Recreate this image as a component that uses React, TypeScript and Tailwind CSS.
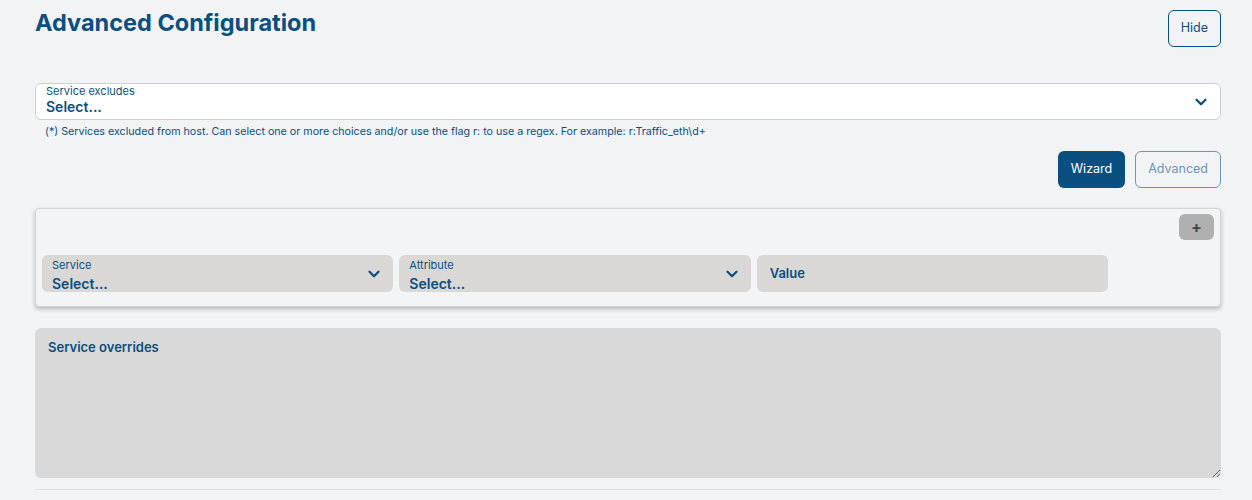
import { ChevronDown } from 'lucide-react';

const SelectBox = ({ label, muted }: { label: string; muted?: boolean }) => (
  <div
    className={`flex items-center justify-between rounded-md h-[37px] pl-[10px] pr-[10px] min-w-0 ${
      muted ? 'bg-[#d9d8d6]' : 'bg-white border border-[#cfcfcf]'
    }`}
  >
    <div className={`flex flex-col leading-none ${muted ? 'mt-[3px]' : 'mt-[-3px]'}`}>
      <span className={`text-[11px] text-[#0b4f80] ${muted ? 'mb-[6px]' : 'mb-[3px]'}`}>{label}</span>
      <span className="text-[14px] font-semibold text-[#0b4f80]">Select...</span>
    </div>
    <ChevronDown className="w-[18px] h-[18px] text-[#0b4f80]" strokeWidth={3} />
  </div>
);

const App = () => {
  return (
    <div className="min-h-[500px] bg-[#f2f3f5] pl-[35px] pr-[31px] pt-[10px] font-['Inter',sans-serif] text-[#0b4f80]">
      <div className="flex justify-between items-start">
        <h1 className="text-[23.5px] font-bold mt-[-1px] leading-[28px]">Advanced Configuration</h1>
        <button className="h-[37px] px-[12px] rounded-md border border-[#0b4f80] text-[12.5px]">
          Hide
        </button>
      </div>

      <div className="mt-[36px]">
        <SelectBox label="Service excludes" />
        <p className="text-[10.7px] mt-[4px] ml-[10px]">
          (*) Services excluded from host. Can select one or more choices and/or use the flag r: to use a regex. For example: r:Traffic_eth\d+
        </p>
      </div>

      <div className="flex justify-end gap-[10px] mt-[11px]">
        <button className="h-[37px] px-[13px] rounded-md bg-[#0b4f80] text-white text-[12.5px]">Wizard</button>
        <button className="h-[37px] px-[12px] rounded-md border border-[#6d95b8] text-[#6d95b8] text-[12.5px]">
          Advanced
        </button>
      </div>

      <div className="mt-[20px] border border-[#d4d4d4] rounded bg-[#f3f4f6] shadow-[0_2px_4px_rgba(0,0,0,0.25)] px-[6px] pt-[5px] pb-[14px]">
        <div className="flex justify-end">
          <button className="w-[35px] h-[26px] rounded-md bg-[#b0b0b0] text-[#444] text-[16px] font-bold leading-none">+</button>
        </div>
        <div className="grid grid-cols-3 gap-[6px] mt-[15px] mr-[106px]">
          <SelectBox label="Service" muted />
          <SelectBox label="Attribute" muted />
          <div className="bg-[#d9d8d6] rounded-md h-[37px] flex items-center pl-[13px] text-[13px] font-semibold">
            Value
          </div>
        </div>
      </div>

      <textarea
        placeholder="Service overrides"
        className="mt-[21px] block w-full h-[150px] rounded-md bg-[#d9d9d9] px-[13px] py-[10px] text-[13px] font-semibold placeholder:text-[#0b4f80] outline-none"
      />
      <div className="mt-[11px] border-t border-[#e2e3e5]" />
    </div>
  );
};

export default App;
